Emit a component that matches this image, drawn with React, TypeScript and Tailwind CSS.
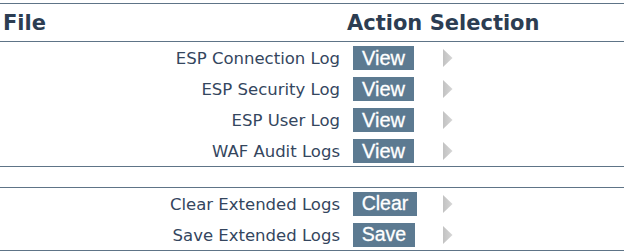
import React from "react";

const Arrow = () => (
  <svg width="10" height="18" viewBox="0 0 10 18" className="block">
    <defs>
      <linearGradient id="ag" x1="0" y1="0" x2="1" y2="0">
        <stop offset="0" stopColor="#c2c2c2" />
        <stop offset="1" stopColor="#d6d6d6" />
      </linearGradient>
    </defs>
    <polygon points="0,0 9.5,9 0,18" fill="url(#ag)" />
  </svg>
);

type RowProps = { label: string; action: string; w: string; small?: boolean };

const Row = ({ label, action, w, small }: RowProps) => (
  <div className="flex h-[31px] items-center">
    <div
      className="w-[341px] text-right text-[16.5px] text-[#34465e] pr-[1px] pt-[4px]"
      style={{ fontFamily: '"DejaVu Sans", Verdana, sans-serif' }}
    >
      {label}
    </div>
    <div className="w-[102px] pl-[12px] flex items-center">
      <div
        className={`${w} h-[24px] flex items-center justify-center bg-[#5c7a91] text-white leading-none ${
          small ? "text-[19.5px]" : "text-[20px]"
        }`}
        style={{ fontFamily: '"Liberation Sans", Arial, sans-serif', WebkitTextStroke: "0.3px white" }}
      >
        {action}
      </div>
    </div>
    <Arrow />
  </div>
);

export default function App() {
  return (
    <div className="w-[625px] h-[252px] bg-white pt-[3px]">
      <div className="w-[624px]">
        <div
          className="flex items-center h-[39px] pt-[3px] border-t border-b border-[#5e7487] text-[21px] font-bold text-[#2c3d52]"
          style={{ fontFamily: '"DejaVu Sans", Verdana, sans-serif' }}
        >
          <div className="w-[347px] pl-[3px]">File</div>
          <div>Action Selection</div>
        </div>
        <div className="border-b border-[#5e7487]">
          <Row label="ESP Connection Log" action="View" w="w-[61px]" />
          <Row label="ESP Security Log" action="View" w="w-[61px]" />
          <Row label="ESP User Log" action="View" w="w-[61px]" />
          <Row label="WAF Audit Logs" action="View" w="w-[61px]" />
        </div>
        <div className="h-[21px] border-b border-[#5e7487]" />
        <div className="border-b border-[#5e7487]">
          <Row label="Clear Extended Logs" action="Clear" w="w-[64px]" small />
          <Row label="Save Extended Logs" action="Save" w="w-[62px]" small />
        </div>
      </div>
    </div>
  );
}
